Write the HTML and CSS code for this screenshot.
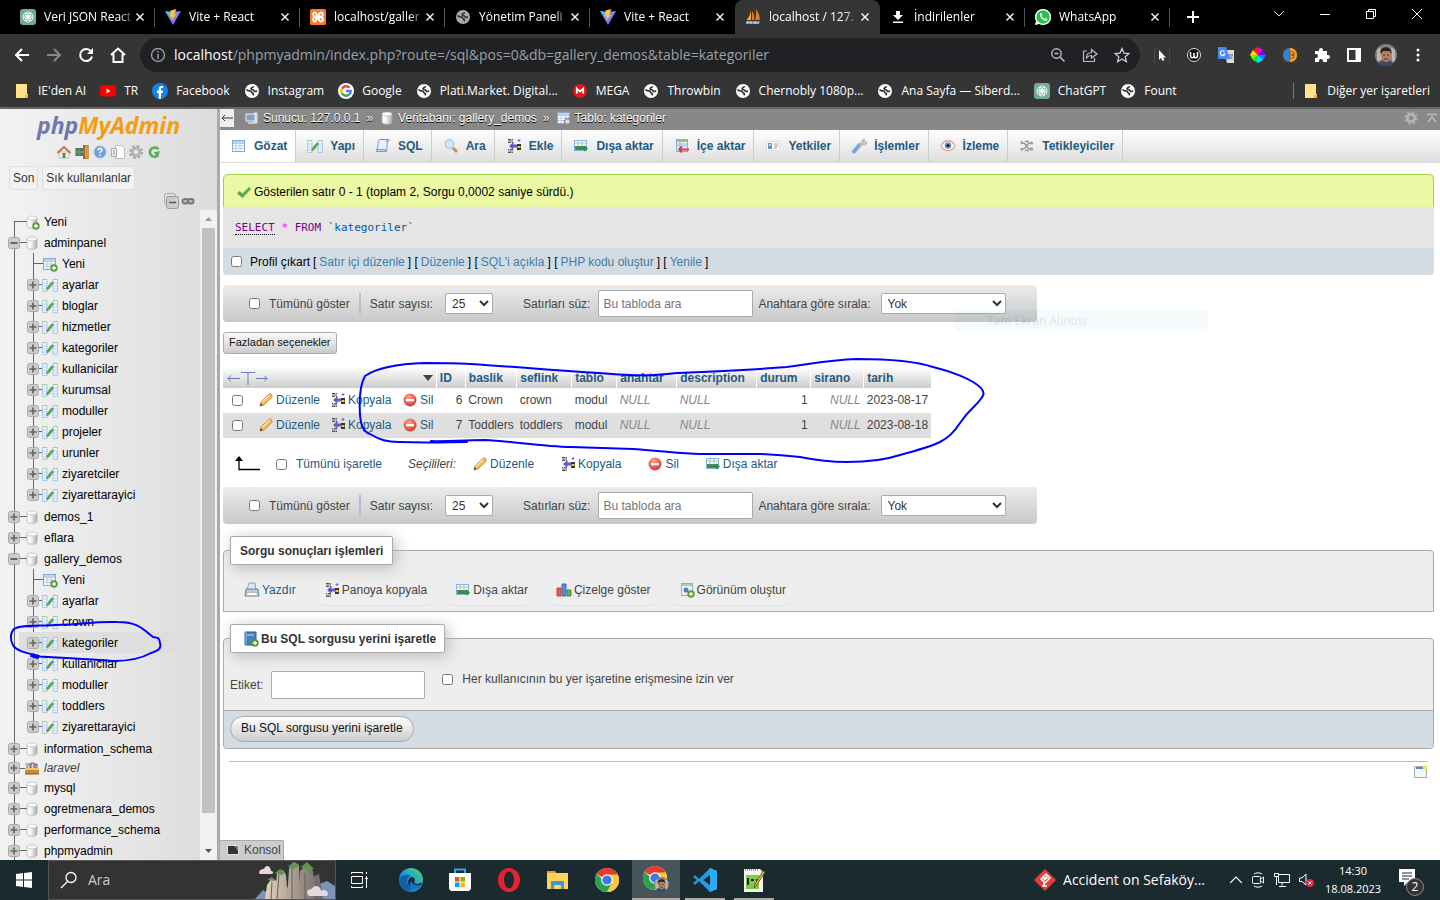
FILE: index.html
```html
<!DOCTYPE html>
<html lang="tr">
<head>
<meta charset="utf-8">
<title>localhost / 127.0.0.1 / gallery_demos / kategoriler | phpMyAdmin</title>
<link rel="stylesheet" href="styles.css">
</head>
<body>
<svg class="defs" width="0" height="0" aria-hidden="true">
<defs>
<linearGradient id="gVite" x1="0" y1="0" x2="1" y2="1"><stop offset="0" stop-color="#41d1ff"/><stop offset="1" stop-color="#bd34fe"/></linearGradient>
<linearGradient id="gEdge" x1="0" y1="1" x2="1" y2="0"><stop offset="0" stop-color="#0c59a4"/><stop offset=".5" stop-color="#1b9de2"/><stop offset="1" stop-color="#5ada5f"/></linearGradient>
<linearGradient id="gCyl"><stop offset="0" stop-color="#fff"/><stop offset=".4" stop-color="#f4f4f4"/><stop offset="1" stop-color="#aaa"/></linearGradient>
<linearGradient id="gRock"><stop offset="0" stop-color="#e2d3bd"/><stop offset=".5" stop-color="#a99c91"/><stop offset="1" stop-color="#6c6468"/></linearGradient>
<radialGradient id="gRed" cx=".4" cy=".3" r=".8"><stop offset="0" stop-color="#ffa08a"/><stop offset="1" stop-color="#cf2f24"/></radialGradient>
</defs>
<symbol id="x" viewBox="0 0 10 10"><path d="M1.500 1.500l7 7m0-7l-7 7" stroke="#eee" stroke-width="1.500"/></symbol>
<symbol id="gpt" viewBox="0 0 16 16"><rect width="16" height="16" rx="3" fill="#74aa9c"/><g fill="none" stroke="#fff" stroke-width=".8"><ellipse cx="8" cy="5.700" rx="2.600" ry="2.900"/><ellipse cx="8" cy="5.700" rx="2.600" ry="2.900" transform="rotate(60 8 8)"/><ellipse cx="8" cy="5.700" rx="2.600" ry="2.900" transform="rotate(120 8 8)"/><ellipse cx="8" cy="5.700" rx="2.600" ry="2.900" transform="rotate(180 8 8)"/><ellipse cx="8" cy="5.700" rx="2.600" ry="2.900" transform="rotate(240 8 8)"/><ellipse cx="8" cy="5.700" rx="2.600" ry="2.900" transform="rotate(300 8 8)"/></g></symbol>
<symbol id="vite" viewBox="0 0 16 16"><path d="M0 2l8 1 8-1-8 14z" fill="url(#gVite)"/><path d="M11.500 0L5.500 1.500 5 8l2-.4-.5 3.900 4.500-6-2 .3z" fill="#ffca28"/></symbol>
<symbol id="xampp" viewBox="0 0 16 16"><rect width="16" height="16" rx="1.500" fill="#fb7a24"/><path d="M5 3.500c-2.500 0-2.500 4 0 4h6c2.500 0 2.500-4 0-4S9 7.500 8 8s-1-4.500-3-4.500zM5 12.500c-2.500 0-2.500-4 0-4h6c2.500 0 2.500 4 0 4s-2-3-3-4-1 4-3 4z" fill="none" stroke="#fff" stroke-width="1.800"/></symbol>
<symbol id="globe" viewBox="0 0 16 16"><circle cx="8" cy="8" r="7" fill="currentColor"/><path d="M2.500 6.500c1.500 2 3 1 4 1.500 1.500.3.500 1.700 2 2 1.500.4 1 1.500.2 2.300M9.500 3.300c0 1-1 1.200-1.700 1.400-1.400.5-.6 2 .8 2 1.500 0 1.400 1.800 2.600 1.800 1 0 1.300-.7 2-.5" fill="none" stroke="#303030" stroke-width="1.600"/></symbol>
<symbol id="pma" viewBox="0 0 16 16"><path d="M6 1v10H1.500C4 8 5.500 5 6 1z" fill="#f7a234"/><path d="M7 2c2 3 2.500 6 2 9H7zM11 0c3 4 4 8 3.800 11H10c1.200-4 1.400-7 1-11z" fill="#e57c18"/><path d="M1 12h14l-1 3H2z" fill="#7b81a8"/><path d="M2 15v-2h2v1M6 15v-3m3 3v-2h2v2m2 0v-2" stroke="#ddd" fill="none"/></symbol>
<symbol id="dl" viewBox="0 0 16 16"><path d="M6 2h4v4h3l-5 5-5-5h3zM3 12.500h10V14H3z" fill="#fff"/></symbol>
<symbol id="wa" viewBox="0 0 16 16"><path d="M8 0a8 8 0 11-3.700 15L0 16l1-4A8 8 0 018 0z" fill="#fff"/><circle cx="8" cy="8" r="6.700" fill="#25c14a"/><path d="M5.300 4c-2 2 2.400 8 5.600 8 1.300-.3 1.600-1.200 1.300-1.900L10.500 9l-1 .9C8 9.300 6.800 8 6.400 7l.7-1-.8-1.900z" fill="#fff"/></symbol>
<symbol id="folder" viewBox="0 0 16 16"><path d="M2 1h11v10h1v4H2z" fill="#ffe28a"/><path d="M11 15v-3h3v3z" fill="#e8b730"/></symbol>
<symbol id="yt" viewBox="0 0 16 16"><rect y="2.500" width="16" height="11" rx="3" fill="#f00"/><path d="M6.500 5.500l4 2.500-4 2.500z" fill="#fff"/></symbol>
<symbol id="fb" viewBox="0 0 16 16"><circle cx="8" cy="8" r="8" fill="#1183ee"/><path d="M6.700 16v-6H4.900V7.600h1.800V6c0-2 1.200-3 2.900-3l1.500.1v2h-1c-1 0-1.100.5-1.100 1.100v1.400h2L10.700 10H9v6z" fill="#fff"/></symbol>
<symbol id="goog" viewBox="0 0 16 16"><circle cx="8" cy="8" r="8" fill="#fff"/><g fill="none" stroke-width="2.400"><path d="M11.500 4.700A4.700 4.700 0 004 5.600" stroke="#ea4335"/><path d="M4 5.500a4.800 4.800 0 000 5" stroke="#fbbc05"/><path d="M4 10.400a4.700 4.700 0 007 1.200" stroke="#34a853"/><path d="M11 11.600A4.700 4.700 0 0012.700 8H8" stroke="#4285f4"/></g></symbol>
<symbol id="mega" viewBox="0 0 16 16"><circle cx="8" cy="8" r="7" fill="#e8141c"/><path d="M4.800 10.500v-5L8 8.500l3.200-3v5" fill="none" stroke="#fff" stroke-width="1.700"/></symbol>
<symbol id="table" viewBox="0 0 16 16"><rect x="1.500" y="2.500" width="12" height="11" fill="#fff" stroke="#85a9d6"/><path d="M2 3h11v2H2z" fill="#bcd6e6"/><path d="M2 5.500h11M2 8h11M2 10.500h11M5 5v8M9 5v8" stroke="#b4cdec" fill="none"/></symbol>
<symbol id="plus" viewBox="0 0 16 16"><circle cx="12" cy="12" r="3.700" fill="#5b9b38"/><path d="M12 10v4m-2-2h4" stroke="#fff" stroke-width="1.300"/></symbol>
<symbol id="newtable" viewBox="0 0 16 16"><use href="#table"/><use href="#plus"/></symbol>
<symbol id="struct" viewBox="0 0 16 16"><path d="M.5 2.500H5v12H.5zM11 2.500h4.500v12H11z" fill="#eef5fd" stroke="#a8c8ea"/><path d="M.5 2.500H5M11 2.500h4.500" stroke="#a3cc90"/><path d="M.5 6H5M.5 9H5M.5 12H5M11 6h4.500M11 9h4.500M11 12h4.500" stroke="#b9d3ef"/><path d="M4.500 12c3.500-.5 3-5.500 7-6.500" fill="none" stroke="#5aa35a" stroke-width="2.800"/></symbol>
<symbol id="db" viewBox="0 0 16 16"><path d="M3 4v8c0 3 10 3 10 0V4z" fill="url(#gCyl)" stroke="#aaa" stroke-width=".7"/><ellipse cx="8" cy="4" rx="5" ry="2" fill="#fbfbfb" stroke="#bbb" stroke-width=".7"/></symbol>
<symbol id="newdb" viewBox="0 0 16 16"><use href="#db"/><use href="#plus"/></symbol>
<symbol id="laravel" viewBox="0 0 16 16"><path d="M1 8h14v6H1z" fill="#c58a32"/><path d="M1 8h14v2H1z" fill="#eec574"/><path d="M3 8V4h3v4m1 0V3h3v5m1 0V4h2v4" fill="#ddd" stroke="#6b4b78"/><path d="M1 14h14" stroke="#8a5b19"/><circle cx="2.500" cy="4" r="1.500" fill="#f4c842"/></symbol>
<symbol id="minus" viewBox="0 0 12 12"><rect x=".5" y=".5" width="11" height="11" rx="2" fill="#ccc" stroke="#aaa"/><path d="M2.500 6h7" stroke="#555" stroke-width="1.700"/></symbol>
<symbol id="expand" viewBox="0 0 12 12"><rect x=".5" y=".5" width="11" height="11" rx="2" fill="#ccc" stroke="#aaa"/><path d="M2.500 6h7M6 2.500v7" stroke="#666" stroke-width="1.700"/></symbol>
<symbol id="home" viewBox="0 0 16 16"><path d="M3 8h10v6H3z" fill="#eee" stroke="#aaa" stroke-width=".6"/><path d="M6.500 9h3v5h-3z" fill="#4a9b46"/><path d="M1.500 9L8 3l6.500 6" fill="none" stroke="#b87a3d" stroke-width="2"/></symbol>
<symbol id="exit" viewBox="0 0 16 16"><path d="M9 1h6v14H9z" fill="#a36a2c"/><path d="M11 2l4-1v14l-4-1z" fill="#cf9a50"/><path d="M1.500 4H9v8H1.500z" fill="#667"/><path d="M2 8l4-3.500V7h4v2.500H6V12z" fill="#4ca94a"/></symbol>
<symbol id="help" viewBox="0 0 16 16"><circle cx="8" cy="8" r="6" fill="#6f9fdc" stroke="#9abbe5"/><path d="M6 6.500c0-3 4-2.500 4-.4C10 7.500 8 7.500 8 9m0 1.500V12" fill="none" stroke="#fff" stroke-width="1.500"/></symbol>
<symbol id="docs" viewBox="0 0 16 16"><path d="M5.500 1.500h6l3 3v10h-9z" fill="#fff" stroke="#bbb"/><path d="M1.500 4.500h5v8h-5z" fill="#eee" stroke="#aaa"/><path d="M4 6v5" stroke="#999"/></symbol>
<symbol id="gear" viewBox="0 0 16 16"><circle cx="8" cy="8" r="5.500" fill="none" stroke="#a8a8a8" stroke-width="3" stroke-dasharray="2.500 1.820"/><circle cx="8" cy="8" r="3.700" fill="none" stroke="#b4b4b4" stroke-width="2.800"/></symbol>
<symbol id="reload" viewBox="0 0 16 16"><path d="M12.500 5C9 2 4 4 4 8c0 4.500 5 6 8 3.500" fill="none" stroke="#57ae58" stroke-width="2.600"/><path d="M7.500 8.500L14 7l-2 6z" fill="#57ae58"/></symbol>
<symbol id="link" viewBox="0 0 16 16"><g fill="#bbb" stroke="#777" stroke-width="1.800"><rect x="2.500" y="6" width="5.500" height="4.500" rx="2"/><rect x="8" y="6" width="5.500" height="4.500" rx="2"/></g></symbol>
<symbol id="server" viewBox="0 0 16 16"><path d="M9 2h5v12H9z" fill="#ddd" stroke="#888"/><rect x="2" y="4" width="9" height="7" fill="#7d9fce" stroke="#eee"/><path d="M4 13h6" stroke="#ddd" stroke-width="1.500"/></symbol>
<symbol id="sql" viewBox="0 0 16 16"><path d="M4.500 1.500h9c-2 1-1 8-2 12h-10c1.500-1 1-10 3-12z" fill="#e6f1fd" stroke="#6e9bd0"/><path d="M1.500 11.500h9v2h-9zM11 3h3V1.500" fill="#c7def7" stroke="#6e9bd0"/></symbol>
<symbol id="search" viewBox="0 0 16 16"><path d="M10 10l4 4" stroke="#c98d4e" stroke-width="2.800"/><circle cx="6.500" cy="6" r="4.300" fill="#d4e8fc" stroke="#a4c4e8" stroke-width="1.300"/></symbol>
<symbol id="insert" viewBox="0 0 16 16"><path d="M2 1h5v3H2zM2 12h5v3H2z" fill="#aaa"/><path d="M2 1.500h5m-5 3h5v7H2m0 3h5" stroke="#555" fill="none" stroke-dasharray="3 1"/><path d="M3 8l4-3.500v2h4v3H7v2z" fill="#6059d2"/><path d="M11 6h4v6h-4z" fill="#333"/><path d="M11.500 8h3v2h-3z" fill="#ffc928"/><path d="M13 1v3m-1.500-1.500h3" stroke="#6c65df"/></symbol>
<symbol id="export" viewBox="0 0 16 16"><rect x="1.500" y="2.500" width="12" height="10" fill="#fff" stroke="#88b4df"/><path d="M2 5h11M5 3v5M9 3v5" stroke="#9dc3c0"/><path d="M2 8h11v4H2z" fill="#548a56"/><path d="M3 10.500h9M11 8l3 2.500-3 2.500" stroke="#318a3b" stroke-width="1.400" fill="none"/></symbol>
<symbol id="import" viewBox="0 0 16 16"><rect x="2.500" y="1.500" width="11" height="12" fill="#eaf3fd" stroke="#88abd7"/><path d="M3 3h10" stroke="#9dc37e" stroke-width="2"/><path d="M3 6h10M3 8h10M6 3v10" stroke="#9bb9dc"/><path d="M15 11.500H5m3-3l-3 3 3 3" stroke="#e5343e" stroke-width="1.800" fill="none"/></symbol>
<symbol id="priv" viewBox="0 0 16 16"><rect x="1.500" y="3.500" width="13" height="9" fill="#fff" stroke="#ddd"/><path d="M3 5h4v6H3z" fill="#5c93cf"/><circle cx="5" cy="7" r="1.300" fill="#efc58c"/><path d="M9 6h4M9 8h4M9 10h3" stroke="#999"/></symbol>
<symbol id="wrench" viewBox="0 0 16 16"><path d="M3 13.500L8.500 7" stroke="#7da2e0" stroke-width="4" stroke-linecap="round"/><path d="M8 7.500l3-2.500c-1-3 2-4.500 3-3l-1.500 2 1 1 2-1c0 3-2 3.500-4 2.500L9 9" fill="#ccc" stroke="#999" stroke-width=".7"/></symbol>
<symbol id="eye" viewBox="0 0 16 16"><path d="M1 8c3-7 11-7 14 0-3 6-11 6-14 0z" fill="#fff" stroke="#dfa587" stroke-width="1.300"/><circle cx="8" cy="7.500" r="3.300" fill="#6f93cd"/><circle cx="8" cy="7.500" r="1.600" fill="#222"/></symbol>
<symbol id="trig" viewBox="0 0 16 16"><path d="M2 5h2c4 0 3 6 7 6h3M2 11h2c4 0 3-6 7-6h3M2.500 3v3m0 4v3M6 3.500h4m-4 9h4" fill="none" stroke="#999" stroke-width="1.500"/><circle cx="12.500" cy="5" r="1.600" fill="#999"/><circle cx="12.500" cy="11" r="1.600" fill="#999"/></symbol>
<symbol id="tgear" viewBox="0 0 16 16"><use href="#table"/><circle cx="11.500" cy="11.500" r="3" fill="#ddd" stroke="#777" stroke-width="1.800" stroke-dasharray="1.500 .8"/></symbol>
<symbol id="check" viewBox="0 0 16 16"><path d="M1 9.500L3.500 7l3 2.500L13 3l2 2-8.500 9z" fill="#5aaa54" stroke="#8dcb80" stroke-width=".5"/></symbol>
<symbol id="pencil" viewBox="0 0 16 16"><path d="M2 14l1-4 8-8 3.300 3-8.300 8z" fill="#f3bd4e" stroke="#b77b2d" stroke-width=".8"/><path d="M4 10.500l8-8" stroke="#ffe5a0" stroke-width="1.400"/><path d="M10.500 2.500l1-1c1-.8 4 2 3 3l-1 1z" fill="#dba58b"/><path d="M2 14l.7-2.700L4.500 13z" fill="#444"/></symbol>
<symbol id="drop" viewBox="0 0 16 16"><circle cx="8" cy="8" r="6.500" fill="url(#gRed)"/><path d="M4 7h8v2.300H4z" fill="#fff"/></symbol>
<symbol id="print" viewBox="0 0 16 16"><path d="M5 1h6l1 7H3z" fill="#d6e8fb" stroke="#82a5ce"/><path d="M2 7h12l1 7H1z" fill="#c2c8d0" stroke="#75808d"/><path d="M3.500 10.500h9l1 3h-11z" fill="#fff" stroke="#999" stroke-width=".6"/></symbol>
<symbol id="chart" viewBox="0 0 16 16"><path d="M1 6h4v8H1z" fill="#e95b59" stroke="#bf3f3d"/><path d="M6 2h4v12H6z" fill="#518fd8" stroke="#356ba9"/><path d="M11 8h4v6h-4z" fill="#6dac69" stroke="#448343"/></symbol>
<symbol id="view" viewBox="0 0 16 16"><rect x="2.500" y="1.500" width="11" height="12" fill="#e9f2fb" stroke="#8fb0d5"/><path d="M3 3h10" stroke="#9dc38d" stroke-width="1.500"/><circle cx="7" cy="8" r="2.500" fill="#517fae"/><use href="#plus"/></symbol>
<symbol id="book" viewBox="0 0 16 16"><path d="M2 1h11v13H2z" fill="#487fb8" stroke="#315f90"/><path d="M4 3h7v2H4z" fill="#85b1df"/><path d="M3 1v13" stroke="#99bfe7"/><use href="#plus"/></symbol>
<symbol id="chrome" viewBox="0 0 24 24"><circle cx="12" cy="12" r="12" fill="#fff"/><path d="M12 12L1.600 6A12 12 0 0122.400 6z" fill="#e33b2e"/><path d="M1.600 6A12 12 0 0012 24l5.200-9H12z" fill="#2ca14b"/><path d="M22.400 6A12 12 0 0112 24l5.200-9L14 6z" fill="#fcc934"/><path d="M12 6h10.400" stroke="#e33b2e"/><circle cx="12" cy="12" r="5.800" fill="#fff"/><circle cx="12" cy="12" r="4.600" fill="#3b78e7"/></symbol>
<symbol id="face" viewBox="0 0 22 22"><circle cx="11" cy="11" r="11" fill="#85827c"/><path d="M2 17V6l3-3 2 13zM16 3l4 3v10l-3 2z" fill="#b9b8b2"/><path d="M4 20c1-6 13-6 14 0a11 11 0 01-14 0z" fill="#384d68"/><path d="M6.500 8h9c1 9-2 10-4.500 10S6 15 6.500 8z" fill="#b77b60"/><path d="M5.500 10C4 1 18 1 16.500 10l-1.500-3H8z" fill="#28201f"/><path d="M8 11h2m2 0h2M9 15h4" stroke="#5c352c"/></symbol>
</svg>

<div class="browser">
  <div class="tabs">
    <button class="tab"><svg class="i16"><use href="#gpt"/></svg><span>Veri JSON React</span><svg class="i10"><use href="#x"/></svg></button>
    <button class="tab"><svg class="i16"><use href="#vite"/></svg><span>Vite + React</span><svg class="i10"><use href="#x"/></svg></button>
    <button class="tab"><svg class="i16"><use href="#xampp"/></svg><span>localhost/galler</span><svg class="i10"><use href="#x"/></svg></button>
    <button class="tab"><svg class="i16 grey"><use href="#globe"/></svg><span>Yönetim Paneli</span><svg class="i10"><use href="#x"/></svg></button>
    <button class="tab"><svg class="i16"><use href="#vite"/></svg><span>Vite + React</span><svg class="i10"><use href="#x"/></svg></button>
    <button class="tab active"><svg class="i16"><use href="#pma"/></svg><span>localhost / 127.</span><svg class="i10"><use href="#x"/></svg></button>
    <button class="tab"><svg class="i16"><use href="#dl"/></svg><span>İndirilenler</span><svg class="i10"><use href="#x"/></svg></button>
    <button class="tab"><svg class="i16"><use href="#wa"/></svg><span>WhatsApp</span><svg class="i10"><use href="#x"/></svg></button>
    <button class="newtab" aria-label="Yeni sekme"><svg width="12" height="12"><path d="M6 0v12M0 6h12" stroke="#fff" stroke-width="2"/></svg></button>
    <div class="wincontrols">
      <button aria-label="Sekme ara"><svg width="12" height="12"><path d="M1 3l5 5 5-5" fill="none" stroke="#ddd"/></svg></button>
      <button aria-label="Küçült"><svg width="12" height="12"><path d="M1 6.500h10" stroke="#fff"/></svg></button>
      <button aria-label="Geri yükle"><svg width="12" height="12"><path d="M1.500 3.500h7v7h-7zM3.500 3V1.500h7v7H9" fill="none" stroke="#fff"/></svg></button>
      <button aria-label="Kapat"><svg width="12" height="12"><path d="M1 1l10 10m0-10L1 11" stroke="#fff"/></svg></button>
    </div>
  </div>
  <div class="toolbar">
    <button aria-label="Geri"><svg width="16" height="16"><path d="M15 8H2m6-6L2 8l6 6" fill="none" stroke="#fff" stroke-width="2"/></svg></button>
    <button aria-label="İleri"><svg width="16" height="16"><path d="M1 8h13M8 2l6 6-6 6" fill="none" stroke="#888" stroke-width="2"/></svg></button>
    <button aria-label="Yenile"><svg width="16" height="16"><path d="M13 4.500A6 6 0 1014 9.500" fill="none" stroke="#fff" stroke-width="2"/><path d="M15 1v6H9z" fill="#fff"/></svg></button>
    <button aria-label="Ana sayfa"><svg width="16" height="16"><path d="M1 8l7-6.500L15 8M3.500 7v8h9V7" fill="none" stroke="#fff" stroke-width="2"/></svg></button>
    <div class="omnibox">
      <svg width="16" height="16"><circle cx="8" cy="8" r="6.500" fill="none" stroke="#999" stroke-width="1.400"/><path d="M8 7v5M8 4v1.500" stroke="#999" stroke-width="1.600"/></svg>
      <div class="url"><b>localhost</b>/phpmyadmin/index.php?route=/sql&amp;pos=0&amp;db=gallery_demos&amp;table=kategoriler</div>
      <button aria-label="Yakınlaştırma"><svg width="16" height="16"><circle cx="6.500" cy="6.500" r="4.700" fill="none" stroke="#bbb" stroke-width="1.400"/><path d="M10 10l4.500 4.500M4.500 6.500h4" stroke="#bbb" stroke-width="1.500"/></svg></button>
      <button aria-label="Paylaş"><svg width="16" height="16"><path d="M5 4H1.500v10.500h11V11M4.500 11c0-4 2-5.500 5-5.500V2.500L15 7l-5.500 4V8.500c-2 0-3.500.5-5 2.500z" fill="none" stroke="#bbb" stroke-width="1.200"/></svg></button>
      <button aria-label="Yer işareti"><svg width="16" height="16"><path d="M8 1.500l2 4.600 5 .4-3.800 3.300 1.200 4.900L8 12l-4.400 2.700 1.200-4.900L1 6.500l5-.4z" fill="none" stroke="#ccc" stroke-width="1.300"/></svg></button>
    </div>
    <div class="exts">
      <button aria-label="İmleç"><svg width="16" height="16"><path d="M.5 0v16M15.500 0v16" stroke="#484848"/><path d="M5 3v10l2-2 1.500 3 2-1L9 10.500h3z" fill="#fff"/></svg></button>
      <button aria-label="W"><svg width="16" height="16"><circle cx="8" cy="8" r="6.500" fill="#111" stroke="#ddd"/><path d="M4.500 5v3.500c0 3 3.500 3 3.500 0V6v2.500c0 3 3.500 3 3.500 0V5" fill="none" stroke="#fff" stroke-width="1.500"/></svg></button>
      <button aria-label="Çeviri"><svg width="16" height="16"><path d="M6 3h10v13H9z" fill="#ddd"/><path d="M0 0h8l4 12H0z" fill="#4a8af4"/><path d="M6.500 4.500A2.400 2.400 0 107 7H5" fill="none" stroke="#fff" stroke-width="1.200"/><path d="M10 8h5m-2.500-1v1m2 0c-.5 2-2 3-3 4m0-3c1 2 2 2.500 3 3" stroke="#6b7b8c" fill="none"/></svg></button>
      <button aria-label="Renk seçici"><svg width="16" height="16"><path d="M8 8V0l5 3z" fill="#f0c"/><path d="M8 8l5-5 3 5z" fill="#70f"/><path d="M8 8h8l-3 5z" fill="#08f"/><path d="M8 8l5 5-5 3z" fill="#0df"/><path d="M8 8v8l-5-3z" fill="#0e5"/><path d="M8 8l-5 5-3-5z" fill="#6f0"/><path d="M8 8H0l3-5z" fill="#fd0"/><path d="M8 8L3 3l5-3z" fill="#f20"/></svg></button>
      <button aria-label="Eklenti"><svg width="16" height="16"><rect width="16" height="16" fill="#4a3428"/><circle cx="8" cy="8" r="7" fill="#2688d8"/><path d="M8 1a7 7 0 010 14z" fill="#f1a91e"/><path d="M8 3v10M9 5h3v3H9m0 0h3v3H9" stroke="#b3342d" fill="none"/></svg></button>
      <button aria-label="Eklentiler"><svg width="16" height="16"><path d="M1 4h4V3a2 2 0 014 0v1h4v4h1a2 2 0 010 4h-1v3H9v-1a2 2 0 00-4 0v1H1v-4h1a2 2 0 000-4H1z" fill="#fff"/></svg></button>
      <button aria-label="Yan panel"><svg width="16" height="16"><path d="M2 2h12v12H2z" fill="none" stroke="#fff" stroke-width="2"/><path d="M9.500 2H14v12H9.500z" fill="#fff"/></svg></button>
      <button aria-label="Profil"><svg width="22" height="22"><use href="#face"/></svg></button>
      <button aria-label="Menü"><svg width="16" height="16" fill="#fff"><circle cx="8" cy="3" r="1.500"/><circle cx="8" cy="8" r="1.500"/><circle cx="8" cy="13" r="1.500"/></svg></button>
    </div>
  </div>
  <nav class="bookmarks">
    <a href="#"><svg class="i16"><use href="#folder"/></svg>IE'den AI</a>
    <a href="#"><svg class="i16"><use href="#yt"/></svg>TR</a>
    <a href="#"><svg class="i16"><use href="#fb"/></svg>Facebook</a>
    <a href="#"><svg class="i16"><use href="#globe"/></svg>Instagram</a>
    <a href="#"><svg class="i16"><use href="#goog"/></svg>Google</a>
    <a href="#"><svg class="i16"><use href="#globe"/></svg>Plati.Market. Digital...</a>
    <a href="#"><svg class="i16"><use href="#mega"/></svg>MEGA</a>
    <a href="#"><svg class="i16"><use href="#globe"/></svg>Throwbin</a>
    <a href="#"><svg class="i16"><use href="#globe"/></svg>Chernobly 1080p...</a>
    <a href="#"><svg class="i16"><use href="#globe"/></svg>Ana Sayfa — Siberd...</a>
    <a href="#"><svg class="i16"><use href="#gpt"/></svg>ChatGPT</a>
    <a href="#"><svg class="i16"><use href="#globe"/></svg>Fount</a>
    <a href="#" class="other"><svg class="i16"><use href="#folder"/></svg>Diğer yer işaretleri</a>
  </nav>
</div>

<div class="page">
  <aside class="sidebar">
    <a class="logo" href="#"><span>php</span>MyAdmin</a>
    <div class="navicons">
      <a href="#" aria-label="Ana sayfa"><svg class="i16"><use href="#home"/></svg></a>
      <a href="#" aria-label="Çıkış"><svg class="i16"><use href="#exit"/></svg></a>
      <a href="#" aria-label="Yardım"><svg class="i16"><use href="#help"/></svg></a>
      <a href="#" aria-label="Belgeler"><svg class="i16"><use href="#docs"/></svg></a>
      <a href="#" aria-label="Ayarlar"><svg class="i16"><use href="#gear"/></svg></a>
      <a href="#" aria-label="Yenile"><svg class="i16"><use href="#reload"/></svg></a>
    </div>
    <div class="recent"><button>Son</button><button>Sık kullanılanlar</button></div>
    <div class="treetools">
      <svg width="16" height="16"><rect x="1.500" y=".5" width="11" height="11" rx="2" fill="#ddd" stroke="#aaa"/><rect x="3.500" y="3.500" width="12" height="12" rx="2" fill="#ccc" stroke="#999"/><path d="M6 9.500h7" stroke="#555" stroke-width="1.500"/></svg>
      <svg class="i16"><use href="#link"/></svg>
    </div>
    <div class="treewrap">
      <ul class="tree">
        <li><div class="row first"><i></i><svg class="i16"><use href="#newdb"/></svg><a href="#">Yeni</a></div></li>
        <li><div class="row"><svg class="i12"><use href="#minus"/></svg><svg class="i16"><use href="#db"/></svg><a href="#">adminpanel</a></div>
          <ul>
            <li><div class="row"><i></i><svg class="i16"><use href="#newtable"/></svg><a href="#">Yeni</a></div></li>
            <li><div class="row"><svg class="i12"><use href="#expand"/></svg><svg class="i16"><use href="#struct"/></svg><a href="#">ayarlar</a></div></li>
            <li><div class="row"><svg class="i12"><use href="#expand"/></svg><svg class="i16"><use href="#struct"/></svg><a href="#">bloglar</a></div></li>
            <li><div class="row"><svg class="i12"><use href="#expand"/></svg><svg class="i16"><use href="#struct"/></svg><a href="#">hizmetler</a></div></li>
            <li><div class="row"><svg class="i12"><use href="#expand"/></svg><svg class="i16"><use href="#struct"/></svg><a href="#">kategoriler</a></div></li>
            <li><div class="row"><svg class="i12"><use href="#expand"/></svg><svg class="i16"><use href="#struct"/></svg><a href="#">kullanicilar</a></div></li>
            <li><div class="row"><svg class="i12"><use href="#expand"/></svg><svg class="i16"><use href="#struct"/></svg><a href="#">kurumsal</a></div></li>
            <li><div class="row"><svg class="i12"><use href="#expand"/></svg><svg class="i16"><use href="#struct"/></svg><a href="#">moduller</a></div></li>
            <li><div class="row"><svg class="i12"><use href="#expand"/></svg><svg class="i16"><use href="#struct"/></svg><a href="#">projeler</a></div></li>
            <li><div class="row"><svg class="i12"><use href="#expand"/></svg><svg class="i16"><use href="#struct"/></svg><a href="#">urunler</a></div></li>
            <li><div class="row"><svg class="i12"><use href="#expand"/></svg><svg class="i16"><use href="#struct"/></svg><a href="#">ziyaretciler</a></div></li>
            <li><div class="row"><svg class="i12"><use href="#expand"/></svg><svg class="i16"><use href="#struct"/></svg><a href="#">ziyarettarayici</a></div></li>
          </ul>
        </li>
        <li><div class="row"><svg class="i12"><use href="#expand"/></svg><svg class="i16"><use href="#db"/></svg><a href="#">demos_1</a></div></li>
        <li><div class="row"><svg class="i12"><use href="#expand"/></svg><svg class="i16"><use href="#db"/></svg><a href="#">eflara</a></div></li>
        <li><div class="row"><svg class="i12"><use href="#minus"/></svg><svg class="i16"><use href="#db"/></svg><a href="#">gallery_demos</a></div>
          <ul>
            <li><div class="row"><i></i><svg class="i16"><use href="#newtable"/></svg><a href="#">Yeni</a></div></li>
            <li><div class="row"><svg class="i12"><use href="#expand"/></svg><svg class="i16"><use href="#struct"/></svg><a href="#">ayarlar</a></div></li>
            <li><div class="row"><svg class="i12"><use href="#expand"/></svg><svg class="i16"><use href="#struct"/></svg><a href="#">crown</a></div></li>
            <li class="selected"><div class="row"><svg class="i12"><use href="#expand"/></svg><svg class="i16"><use href="#struct"/></svg><a href="#">kategoriler</a></div></li>
            <li><div class="row"><svg class="i12"><use href="#expand"/></svg><svg class="i16"><use href="#struct"/></svg><a href="#">kullanicilar</a></div></li>
            <li><div class="row"><svg class="i12"><use href="#expand"/></svg><svg class="i16"><use href="#struct"/></svg><a href="#">moduller</a></div></li>
            <li><div class="row"><svg class="i12"><use href="#expand"/></svg><svg class="i16"><use href="#struct"/></svg><a href="#">toddlers</a></div></li>
            <li><div class="row"><svg class="i12"><use href="#expand"/></svg><svg class="i16"><use href="#struct"/></svg><a href="#">ziyarettarayici</a></div></li>
          </ul>
        </li>
        <li><div class="row"><svg class="i12"><use href="#expand"/></svg><svg class="i16"><use href="#db"/></svg><a href="#">information_schema</a></div></li>
        <li><div class="row group"><svg class="i12"><use href="#expand"/></svg><svg class="i16"><use href="#laravel"/></svg><a href="#">laravel</a></div></li>
        <li><div class="row"><svg class="i12"><use href="#expand"/></svg><svg class="i16"><use href="#db"/></svg><a href="#">mysql</a></div></li>
        <li><div class="row"><svg class="i12"><use href="#expand"/></svg><svg class="i16"><use href="#db"/></svg><a href="#">ogretmenara_demos</a></div></li>
        <li><div class="row"><svg class="i12"><use href="#expand"/></svg><svg class="i16"><use href="#db"/></svg><a href="#">performance_schema</a></div></li>
        <li><div class="row"><svg class="i12"><use href="#expand"/></svg><svg class="i16"><use href="#db"/></svg><a href="#">phpmyadmin</a></div></li>
      </ul>
      <div class="scrollbar">
        <svg width="7" height="4"><path d="M0 4l3.500-4L7 4z" fill="#999"/></svg>
        <div class="thumb"></div>
        <svg width="7" height="4"><path d="M0 0h7L3.500 4z" fill="#555"/></svg>
      </div>
    </div>
  </aside>

  <main>
    <div class="crumbs">
      <button class="collapse" aria-label="Paneli gizle"><svg width="12" height="8"><path d="M12 4H1m3-3L1 4l3 3" fill="none" stroke="#333"/></svg></button>
      <a href="#"><svg class="i16"><use href="#server"/></svg>Sunucu: 127.0.0.1</a><span>»</span>
      <a href="#"><svg class="i16"><use href="#db"/></svg>Veritabanı: gallery_demos</a><span>»</span>
      <a href="#"><svg class="i16"><use href="#tgear"/></svg>Tablo: kategoriler</a>
      <div class="crumbtools"><svg class="i16"><use href="#gear"/></svg><svg width="10" height="10"><path d="M0 1.500h10M1 9l4-5 4 5" fill="none" stroke="#bbb" stroke-width="1.500"/></svg></div>
    </div>
    <nav class="menu">
      <a class="on" href="#"><svg class="i16"><use href="#table"/></svg>Gözat</a>
      <a href="#"><svg class="i16"><use href="#struct"/></svg>Yapı</a>
      <a href="#"><svg class="i16"><use href="#sql"/></svg>SQL</a>
      <a href="#"><svg class="i16"><use href="#search"/></svg>Ara</a>
      <a href="#"><svg class="i16"><use href="#insert"/></svg>Ekle</a>
      <a href="#"><svg class="i16"><use href="#export"/></svg>Dışa aktar</a>
      <a href="#"><svg class="i16"><use href="#import"/></svg>İçe aktar</a>
      <a href="#"><svg class="i16"><use href="#priv"/></svg>Yetkiler</a>
      <a href="#"><svg class="i16"><use href="#wrench"/></svg>İşlemler</a>
      <a href="#"><svg class="i16"><use href="#eye"/></svg>İzleme</a>
      <a href="#"><svg class="i16"><use href="#trig"/></svg>Tetikleyiciler</a>
    </nav>
    <div class="content">
      <div class="result">
        <div class="success"><svg class="i16"><use href="#check"/></svg>Gösterilen satır 0 - 1 (toplam 2, Sorgu 0,0002 saniye sürdü.)</div>
        <code><a class="kw" href="#">SELECT</a> <span class="op">*</span> <span class="kw2">FROM</span> <span class="id">`kategoriler`</span></code>
        <div class="sqltools"><label><input type="checkbox">Profil çıkart</label> [ <a href="#">Satır içi düzenle</a> ] [ <a href="#">Düzenle</a> ] [ <a href="#">SQL'i açıkla</a> ] [ <a href="#">PHP kodu oluştur</a> ] [ <a href="#">Yenile</a> ]</div>
      </div>
      <div class="navbar">
        <label class="all"><input type="checkbox">Tümünü göster</label>
        <label class="rows">Satır sayısı: <select><option>25</option></select></label>
        <label class="filter">Satırları süz: <input type="text" placeholder="Bu tabloda ara"></label>
        <label class="sort">Anahtara göre sırala: <select><option>Yok</option></select></label>
      </div>
      <button class="options">Fazladan seçenekler</button>
      <table class="data">
        <thead><tr>
          <th colspan="4"><div class="tt"><svg width="44" height="14" fill="none" stroke="#6a78b8"><path d="M14 7.500H2m3-3l-3 3 3 3M15 1.500h14M22 1.500V14M30 7.500h11m-3-3l3 3-3 3"/></svg><svg width="10" height="6"><path d="M0 0h10L5 6z" fill="#444"/></svg></div></th>
          <th class="cid">ID</th><th class="cbas">baslik</th><th class="csef">seflink</th><th class="ctab">tablo</th><th class="cana">anahtar</th><th class="cdes">description</th><th class="cdur">durum</th><th class="csir">sirano</th><th class="ctar">tarih</th>
        </tr></thead>
        <tbody>
          <tr><td class="ck"><input type="checkbox" aria-label="Satır 6"></td><td class="a1"><a href="#"><svg class="i16"><use href="#pencil"/></svg>Düzenle</a></td><td class="a2"><a href="#"><svg class="i16"><use href="#insert"/></svg>Kopyala</a></td><td class="a3"><a href="#"><svg class="i16"><use href="#drop"/></svg>Sil</a></td><td class="num">6</td><td>Crown</td><td>crown</td><td>modul</td><td><i>NULL</i></td><td><i>NULL</i></td><td class="num">1</td><td class="num"><i>NULL</i></td><td>2023-08-17</td></tr>
          <tr><td class="ck"><input type="checkbox" aria-label="Satır 7"></td><td class="a1"><a href="#"><svg class="i16"><use href="#pencil"/></svg>Düzenle</a></td><td class="a2"><a href="#"><svg class="i16"><use href="#insert"/></svg>Kopyala</a></td><td class="a3"><a href="#"><svg class="i16"><use href="#drop"/></svg>Sil</a></td><td class="num">7</td><td>Toddlers</td><td>toddlers</td><td>modul</td><td><i>NULL</i></td><td><i>NULL</i></td><td class="num">1</td><td class="num"><i>NULL</i></td><td>2023-08-18</td></tr>
        </tbody>
      </table>
      <div class="bulk">
        <svg width="26" height="16"><path d="M5 3v10.500h21" fill="none" stroke="#000" stroke-width="1.300"/><path d="M1 5l4-5 4 5z"/></svg>
        <label><input type="checkbox">Tümünü işaretle</label>
        <em>Seçilileri:</em>
        <button><svg class="i16"><use href="#pencil"/></svg>Düzenle</button>
        <button><svg class="i16"><use href="#insert"/></svg>Kopyala</button>
        <button><svg class="i16"><use href="#drop"/></svg>Sil</button>
        <button><svg class="i16"><use href="#export"/></svg>Dışa aktar</button>
      </div>
      <div class="navbar">
        <label class="all"><input type="checkbox">Tümünü göster</label>
        <label class="rows">Satır sayısı: <select><option>25</option></select></label>
        <label class="filter">Satırları süz: <input type="text" placeholder="Bu tabloda ara"></label>
        <label class="sort">Anahtara göre sırala: <select><option>Yok</option></select></label>
      </div>
      <fieldset class="ops">
        <legend>Sorgu sonuçları işlemleri</legend>
        <div class="oprow">
          <button class="plain"><svg class="i16"><use href="#print"/></svg>Yazdır</button>
          <button><svg class="i16"><use href="#insert"/></svg>Panoya kopyala</button>
          <button><svg class="i16"><use href="#export"/></svg>Dışa aktar</button>
          <button><svg class="i16"><use href="#chart"/></svg>Çizelge göster</button>
          <button><svg class="i16"><use href="#view"/></svg>Görünüm oluştur</button>
        </div>
      </fieldset>
      <fieldset class="mark">
        <legend><svg class="i16"><use href="#book"/></svg>Bu SQL sorgusu yerini işaretle</legend>
        <div class="markrow">
          <label class="tag">Etiket: <input type="text"></label>
          <label class="share"><input type="checkbox">Her kullanıcının bu yer işaretine erişmesine izin ver</label>
        </div>
        <div class="markfoot"><button>Bu SQL sorgusu yerini işaretle</button></div>
      </fieldset>
      <div class="pagefoot"><a href="#" aria-label="Yeni pencere"><svg width="14" height="14"><path d="M.5 1.500h12v11H.5z" fill="#f5f5f5" stroke="#aaa"/><path d="M2 3h9" stroke="#2b5ba5" stroke-width="1.500"/><circle cx="11" cy="2.500" r="2.300" fill="#f5eb3d"/></svg></a></div>
    </div>
    <button class="console"><svg width="12" height="10"><rect x=".5" y=".5" width="11" height="9" fill="#333" stroke="#ddd"/><path d="M7 1l4 5V1z" fill="#777"/></svg>Konsol</button>
  </main>
</div>

<footer class="taskbar">
  <button class="start" aria-label="Başlat"><svg width="16" height="16" fill="#fff"><path d="M0 2l7-1v6.500H0zM8 1l8-1v7.500H8zM0 8.500h7V15l-7-1zM8 8.500h8V16l-8-1z"/></svg></button>
  <div class="search">
    <svg width="18" height="18"><circle cx="11" cy="6.500" r="5" fill="none" stroke="#fff" stroke-width="1.300"/><path d="M7.500 10.500L1 17" stroke="#fff" stroke-width="1.300"/></svg>
    <input type="text" placeholder="Ara" aria-label="Ara">
    <svg class="rocks" width="80" height="38" viewBox="0 0 80 38"><path d="M0 38l8-9 8 5 12-8 20 2 14-4 10-4 8 5v13z" fill="#7d93b8"/><path d="M10 38l2-14 5-7 6 4 2 17zM20 38l2-26 6-3 3 5 2 24zM32 38l2-30 5-7 5 3 1 34zM44 38l1-28 6-6 7 6 4 28zM58 38V16l6-3 4 25z" fill="url(#gRock)"/><path d="M22 38l2-25M37 38V6m13 32V12m-34 26l1-17m44 17V20" stroke="#675d5b"/><path d="M20 12l5-4 5 3-3 3zM12 19l5-3 3 4zM33 6l5-5 6 4-6 3zM46 6l6-5 7 7-6 2z" fill="#5d974f"/><path d="M4 12c0-5 6-3 6-6 4-3 6 2 6 4 3 0 3 3 0 3H5zM52 32c0-5 6-3 6-6 5-3 8 1 8 4 4-3 9 2 6 5H54z" fill="#e6d6dd"/></svg>
  </div>
  <div class="apps">
    <button class="taskview" aria-label="Görev görünümü"><svg width="18" height="18" fill="none" stroke="#fff"><path d="M.5 5.500h11v7H.5zM.5 3V1.500h11V3M.5 15v1.500h11V15M15.500 1v2m0 2v12M14 7.500h3"/></svg></button>
    <button aria-label="Edge"><svg width="24" height="24"><circle cx="12" cy="12" r="12" fill="url(#gEdge)"/><path d="M1 14C0 8 7 5 12 8c-5 1-6 8 1 13-5 4-11-1-12-7z" fill="#145fa8"/><path d="M12 9c5 0 4 4 3 5 1 3 6 2 8 0-1 5-5 7-9 7-5-3-7-8-2-12z" fill="#1b2a2f"/><path d="M13 21c4 1 7-1 9-4-3 1-9 0-10-4-2 3-1 6 1 8z" fill="#1476c6"/></svg></button>
    <button aria-label="Store"><svg width="24" height="24"><path d="M7 6V1.500h10V6" fill="none" stroke="#2aa7e8" stroke-width="2"/><path d="M1 5h22v16l-2 2H3l-2-2z" fill="#fff"/><path d="M7 9h4.500v4.500H7z" fill="#f25022"/><path d="M12.500 9H17v4.500h-4.500z" fill="#7fba00"/><path d="M7 14.500h4.500V19H7z" fill="#00a4ef"/><path d="M12.500 14.500H17V19h-4.500z" fill="#ffb900"/></svg></button>
    <button aria-label="Opera"><svg width="24" height="24"><ellipse cx="12" cy="12" rx="11" ry="12" fill="#e8202f"/><ellipse cx="12" cy="12" rx="5" ry="8.500" fill="#1b2a2f"/></svg></button>
    <button aria-label="Dosya Gezgini"><svg width="24" height="24"><path d="M1 3h8l2 3H1z" fill="#e6a023"/><path d="M1 5h21v16H1z" fill="#ffd35a"/><path d="M5 13h13v8h-3v-4H8v4H5z" fill="#3c96d9"/></svg></button>
    <button aria-label="Chrome"><svg width="24" height="24"><use href="#chrome"/></svg></button>
    <button class="current" aria-label="Chrome profil"><svg width="26" height="26"><use href="#chrome" width="24" height="24"/><use href="#face" x="11" y="11" width="15" height="15"/></svg></button>
    <button class="open" aria-label="VS Code"><svg width="24" height="24"><path d="M17 0l7 3v18l-7 3L6 13 2 17l-2-2 4-3-4-3 2-2 4 4zM17 7l-7 5 7 5z" fill="#219de4" fill-rule="evenodd"/><path d="M17 0l7 3v18l-7 3z" fill="#2eaaf2"/></svg></button>
    <button class="open" aria-label="Notepad++"><svg width="24" height="24"><path d="M2 1h16l3 3v20H2z" fill="#f5f5ed"/><path d="M3 2h14" stroke="#999" stroke-width="2" stroke-dasharray="1 1"/><path d="M4 7h13v14H4z" fill="#82c947"/><path d="M6 10v7M9 12h3m2 0h3" stroke="#222" stroke-width="2"/><path d="M21 3l2 1-9 14-2 2 1-4z" fill="#f4c13b" stroke="#6a5b23"/></svg></button>
  </div>
  <button class="news"><svg width="22" height="22"><path d="M11 0l11 11-11 11L0 11z" fill="#e63a3d"/><path d="M7 10l5-5 4 4-5 5zM10 13v4m-2 0h5" stroke="#fff" stroke-width="1.500" fill="none"/><path d="M9 9l4-2 1 2-4 3z" fill="#fff"/></svg>Accident on Sefaköy...</button>
  <div class="tray">
    <svg width="12" height="16"><path d="M0 11l6-6 6 6" fill="none" stroke="#fff" stroke-width="1.200"/></svg>
    <svg width="16" height="16" fill="none" stroke="#fff"><rect x="2.500" y="4.500" width="8" height="7" rx="1"/><path d="M10.500 7l3-2v6l-3-2M4 2c2-1.500 6-1.500 8 0M4 14c2 1.500 6 1.500 8 0"/></svg>
    <svg width="16" height="16" fill="none" stroke="#fff"><path d="M5 2.500h10.500v8H4.500V5M8 10.500v3M5 14.500h7M.5 1.500h4v3h-4zM2.500 5v8"/></svg>
    <svg width="16" height="16"><path d="M1.500 6H4l4-4v11L4 9.500H1.500z" fill="none" stroke="#fff"/><circle cx="12" cy="11" r="4" fill="#d92b3c"/><path d="M10.500 9.500l3 3m0-3l-3 3" stroke="#fff"/></svg>
  </div>
  <div class="clock"><span>14:30</span><span>18.08.2023</span></div>
  <button class="notif" aria-label="Bildirimler"><svg width="26" height="26"><path d="M1 2h16v13h-7l-4 4v-4H1z" fill="#fff"/><path d="M4 6h10M4 9h10M4 12h7" stroke="#1b2a2f"/></svg><span>2</span></button>
</footer>

<div class="ghost">Tam Ekran Alıntısı</div>
<svg class="ink" width="1000" height="670" viewBox="0 0 1000 670">
  <path d="M431 441C445 442 460 440 485 440C510 441 540 446 571 447L633 449C665 451 680 454 700 454L760 454C780 455 790 456 800 457C815 460 830 462 847 462C865 462 885 460 900 455C915 451 930 447 940 442C948 438 955 431 960 423C970 408 976 406 980 400C984 395 985 393 981 388C972 379 950 371 933 367C915 361 885 359 857 359C830 360 810 364 787 367C750 370 700 372 677 373C660 375 645 376 630 375C590 373 530 368 471 364C450 363 435 363 425 363C395 364 375 369 365 376C361 383 359 398 360 415C361 427 364 432 370 434C380 440 387 442 399 442C430 443 450 442 467 442"/>
  <path d="M31 656L38 658M39 656C27 653 16 651 13 645C10 640 10 633 14 629C20 625 35 626 55 625C85 625 90 621 117 622C137 622 142 628 153 637C158 638 159 637 160 643C162 649 157 651 151 653C142 658 130 661 114 661C95 660 70 658 32 656"/>
</svg>
</body>
</html>
```
FILE: styles.css
```css
* { box-sizing: border-box; }
body {
  margin: 0;
  height: 100vh;
  display: flex;
  flex-direction: column;
  overflow: hidden;
  font: 12px/16px "Liberation Sans", Arial, sans-serif;
  color: #444;
  background: #fff;
}
button, input, select { font: inherit; color: inherit; }
button { border: 0; background: none; padding: 0; margin: 0; display: flex; align-items: center; justify-content: center; }
a { text-decoration: none; color: inherit; }
svg { flex: none; display: block; }
.defs { position: absolute; }
.i16 { width: 16px; height: 16px; }
.i12 { width: 12px; height: 12px; }
.i10 { width: 10px; height: 10px; }
input[type="checkbox"] { width: 11px; height: 11px; margin: 1px; flex: none; }

/* browser chrome */
.browser { flex: none; color: #fff; font-family: "Open Sans", sans-serif; background: #353535; border-bottom: 2px solid #666; }
.tabs { display: flex; height: 34px; background: #000; padding-left: 10px; }
.tab { width: 145px; height: 34px; justify-content: flex-start; padding: 0 10px; position: relative; color: #fff; }
.tab::after { content: ""; position: absolute; right: 0; top: 8px; height: 19px; border-right: 1px solid #555; }
.tab span { flex: 1; min-width: 0; margin-left: 8px; white-space: nowrap; text-align: left; mask-image: linear-gradient(90deg, #000 75px, transparent 92px); }
.tab.active { background: #353535; border-radius: 8px 8px 0 0; }
.tab.active::after, .tab:nth-child(5)::after { border: 0; }
.grey { color: #aaa; }
.newtab { width: 45px; }
.wincontrols { margin-left: auto; display: flex; }
.wincontrols button { width: 46px; height: 28px; }
.toolbar { display: flex; align-items: center; height: 42px; padding: 0 6px; }
.toolbar > button { width: 32px; height: 32px; }
.omnibox { flex: 1; display: flex; align-items: center; height: 34px; margin-left: 6px; border-radius: 17px; background: #202124; padding: 0 2px 0 10px; font-size: 14px; line-height: 20px; color: #9aa0a6; }
.omnibox button { width: 32px; }
.url { flex: 1; margin-left: 8px; white-space: nowrap; }
.url b { font-weight: 400; color: #fff; }
.exts { display: flex; margin-left: 6px; }
.exts button { width: 32px; height: 32px; }
.bookmarks { display: flex; align-items: center; height: 31px; padding: 0 10px 2px 14px; gap: 14px; white-space: nowrap; }
.bookmarks a { display: flex; align-items: center; gap: 8px; }
.bookmarks .other { margin-left: auto; border-left: 1px solid #777; padding-left: 9px; }

/* navigation panel */
.page { flex: 1; min-height: 0; display: flex; }
.sidebar { flex: none; width: 220px; border-right: 3px solid #aaa; background: linear-gradient(90deg, #f3f3f3, #dcdcdc); display: flex; flex-direction: column; color: #000; }
.logo { align-self: center; font: italic 700 23px/32px "Open Sans", sans-serif; color: #f89c0e; }
.logo span { color: #6c78af; }
.navicons { display: flex; gap: 2px; padding: 3px 0 0 56px; height: 22px; }
.recent { display: flex; gap: 4px; padding: 3px 9px 1px; }
.recent button { height: 24px; padding: 0 3px; border: 1px solid #ddd; border-radius: 3px; background: #f2f2f2; color: #333; }
.treetools { display: flex; gap: 1px; align-items: center; height: 19px; padding-left: 163px; }
.treewrap { flex: 1; min-height: 0; display: flex; }
.tree { flex: 1; margin: 0; padding: 1px 0 0; list-style: none; overflow: hidden; background: linear-gradient(#666, #666) 14px 12px / 1px 100% no-repeat; }
.tree ul { margin: 0; padding: 0 0 1px 19px; list-style: none; background: linear-gradient(#666, #666) 33px 0 / 1px calc(100% - 11px) no-repeat; }
.row { display: flex; align-items: center; height: 21px; padding-left: 8px; white-space: nowrap; background: linear-gradient(#666, #666) 14px 50% / 14px 1px no-repeat; }
.row > :first-child { flex: none; }
.row > :nth-child(2) { margin-left: 4px; }
.row i { width: 12px; }
.row a { margin-left: 4px; }
.tree ul .row > :nth-child(2) { margin-left: 3px; }
.row.group { height: 18px; font-style: italic; color: #444; }
.selected { background: #dedede; }
.scrollbar { flex: none; width: 17px; background: #f1f1f1; display: flex; flex-direction: column; align-items: center; padding: 7px 0; gap: 7px; }
.thumb { width: 13px; background: #c1c1c1; flex: 1; margin-bottom: 29px; }

/* main panel */
main { flex: 1; min-width: 0; display: flex; flex-direction: column; position: relative; }
.crumbs { display: flex; align-items: center; height: 21px; background: #888; color: #fff; text-shadow: 0 1px 0 #000; padding-bottom: 3px; }
.collapse { width: 14px; height: 18px; background: #eee; margin-right: 10px; }
.crumbs a { display: flex; align-items: center; gap: 3px; }
.crumbs span { margin: 0 6px; }
.crumbtools { display: flex; align-items: center; gap: 8px; margin: 0 3px 0 auto; }
.menu { display: flex; height: 33px; background: linear-gradient(#fff, #dcdcdc); font-weight: 700; color: #235a81; padding-bottom: 1px; }
.menu a { display: flex; align-items: center; gap: 7px; padding: 0 8px 0 11px; border-right: 1px solid #ccc; white-space: nowrap; }
.menu .on { background: #fff; }
.content { padding: 11px 6px 0 3px; }
.success { display: flex; align-items: center; height: 33px; padding: 2px 0 0 12px; gap: 2px; color: #000; background: #ebf8a4; border: solid #a2d246; border-width: 1px 1px 0; border-radius: 5px 5px 0 0; }
.result code { display: block; height: 41px; background: #e5e5e5; padding: 12px; font: 11px/18px "DejaVu Sans Mono", monospace; }
.kw { color: #708; border-bottom: 1px dotted #000; }
.kw2 { color: #708; }
.op { color: #f0f; }
.id { color: #05a; }
.sqltools { display: flex; align-items: center; gap: 3px; height: 27px; padding-left: 7px; background: #d3dce3; border-radius: 0 0 4px 4px; color: #000; }
.sqltools label { display: flex; align-items: center; gap: 7px; }
.sqltools a { color: #3a7ead; }
.navbar { display: flex; align-items: center; width: max-content; height: 37px; margin-top: 10px; padding: 0 31px 0 25px; border-radius: 4px; background: linear-gradient(#ececec, #c8c8c8); }
.navbar label { display: flex; align-items: center; }
.navbar input[type="checkbox"] { margin-right: 9px; }
.all { padding-right: 9px; }
.rows { border-left: 2px solid #b0c0d8; padding-left: 9px; gap: 12px; margin-right: 30px; }
.filter { gap: 8px; margin-right: 5px; }
.sort { gap: 10px; }
select, input[type="text"] { background: #fff; border: 1px solid #aaa; border-radius: 2px; }
.navbar select { height: 21px; padding: 0 2px; color: #333; }
.rows select { width: 48px; }
.sort select { width: 125px; }
.filter input { width: 155px; height: 27px; padding: 0 4px; }
.options { height: 22px; margin-top: 10px; padding: 0 5px 2px; border: 1px solid #aaa; border-radius: 3px; background: linear-gradient(#fafafa, #ccc); font-size: 11px; color: #111; }
.data { border-collapse: collapse; margin-top: 13px; white-space: nowrap; }
.data th { height: 21px; padding: 0 3px; text-align: left; color: #235a81; background: linear-gradient(#fff, #ccc); border-right: 1px solid #fff; }
.data td { height: 25px; padding: 0 3px 1px; }
.data tbody tr:nth-child(2) { background: #dfdfdf; }
.data i { color: #888; }
.data td a { display: flex; align-items: center; gap: 2px; color: #235a81; }
.tt { display: flex; align-items: center; justify-content: space-between; }
.ck { width: 32px; }
.data td.ck { padding-left: 8px; }
.ck input { display: block; }
.a1 { width: 72px; }
.a2 { width: 72px; }
.a3 { width: 37px; }
.num { text-align: right; }
.cid { width: 29px; }
.cbas { width: 51px; }
.csef { width: 55px; }
.ctab { width: 45px; }
.cana { width: 60px; }
.cdes { width: 80px; }
.cdur { width: 54px; }
.csir { width: 53px; }
.ctar { width: 67px; }
.bulk { display: flex; align-items: center; height: 40px; margin-top: 6px; padding-left: 11px; color: #235a81; }
.bulk label { display: flex; align-items: center; gap: 8px; margin: 0 26px 0 15px; }
.bulk em { color: #444; margin-right: 16px; }
.bulk button { gap: 2px; margin-right: 26px; }
.bulk + .navbar { margin-top: 3px; }
fieldset { margin: 0; padding: 0; min-width: 0; border: 1px solid #aaa; border-radius: 4px 4px 0 0; background: #eee; }
legend { display: flex; align-items: center; gap: 2px; height: 29px; margin-left: 6px; padding: 0 9px; background: #fff; border: 1px solid #aaa; border-radius: 2px; box-shadow: 3px 3px 15px #bbb; font-weight: 700; color: #333; }
.ops { margin-top: 12px; }
.oprow { display: flex; gap: 4px; padding: 10px 7px 5px; }
.oprow button { height: 31px; padding: 0 11px 0 13px; gap: 2px; border-radius: 14px; border-bottom: 1px solid #e2e2e2; }
.oprow .plain { color: #235a81; border-color: transparent; }
.mark { margin-top: 12px; border-radius: 4px; }
.mark legend { padding: 0 8px 0 12px; }
.markrow { display: flex; align-items: flex-start; gap: 16px; padding: 18px 6px 11px; }
.markrow label { display: flex; align-items: center; gap: 8px; }
.tag input { width: 154px; height: 28px; }
.markfoot { height: 38px; padding: 5px 6px; border-top: 1px solid #aaa; background: #d3dce3; border-radius: 0 0 4px 4px; }
.markfoot button { height: 26px; padding: 0 10px 2px; border: 1px solid #aaa; border-radius: 13px; background: linear-gradient(#fff, #ccc); color: #111; }
.pagefoot { display: flex; justify-content: flex-end; margin: 12px 6px 0; padding-top: 3px; border-top: 1px solid #bbb; }
.console { align-self: flex-start; margin-top: auto; height: 20px; gap: 5px; padding: 0 2px 2px 7px; background: #ccc; border: 1px solid #aaa; border-width: 1px 1px 0 0; border-radius: 0 2px 0 0; }

/* taskbar */
.taskbar { flex: none; display: flex; align-items: center; height: 40px; background: #1b2a2f; color: #fff; font-family: "Open Sans", sans-serif; }
.start { width: 48px; height: 40px; }
.search { display: flex; align-items: center; width: 288px; height: 40px; padding-left: 11px; background: #333; border: 1px solid #555; }
.search input { flex: 1; min-width: 0; margin-left: 10px; padding: 0; border: 0; background: none; font-size: 14px; }
.search input::placeholder { color: #ccc; }
.apps { display: flex; gap: 1px; }
.apps button { width: 48px; height: 40px; }
.apps .taskview { margin-right: 2px; }
.apps .current { background: #47555a; border-bottom: 2px solid #aaa; }
.apps .open { background: linear-gradient(#aaa, #aaa) 50% 100% / 40px 2px no-repeat; }
.news { gap: 7px; margin-left: auto; font-size: 14px; line-height: 20px; }
.tray { display: flex; gap: 8px; margin: 0 10px 0 25px; }
.clock { display: flex; flex-direction: column; align-items: center; width: 58px; font-size: 11px; line-height: 18px; }
.notif { position: relative; margin: 0 16px; height: 40px; color: #fff; }
.notif span { position: absolute; left: 8px; top: 18px; width: 18px; height: 18px; border: 1px solid #888; border-radius: 9px; background: #333; font-size: 12px; line-height: 16px; }

/* overlays */
.ghost { position: absolute; left: 955px; top: 310px; width: 253px; height: 21px; padding-left: 32px; background: rgba(0, 130, 215, .04); color: rgba(100, 100, 100, .18); font: 12px/21px "Open Sans", sans-serif; }
.ink { position: absolute; left: 0; top: 0; pointer-events: none; fill: none; stroke: #00f; stroke-width: 2; stroke-linecap: round; stroke-linejoin: round; }
```
